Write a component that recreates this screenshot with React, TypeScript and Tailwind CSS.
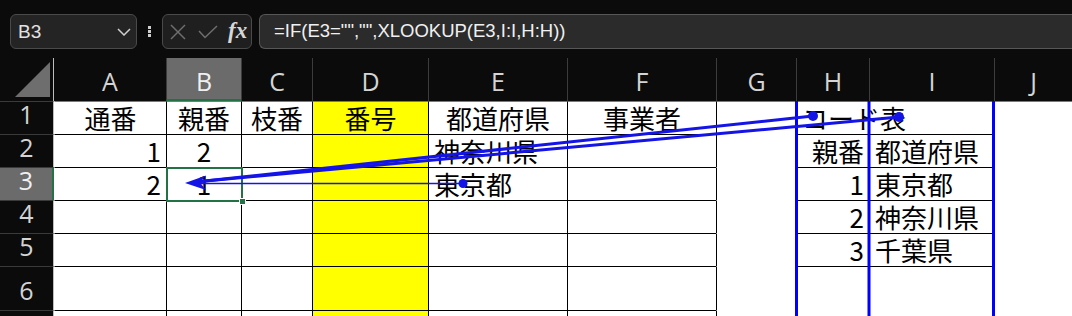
import React from "react";

const COLW = [
  "w-[54px]",
  "w-[112px]",
  "w-[75px]",
  "w-[71px]",
  "w-[116px]",
  "w-[139px]",
  "w-[149px]",
  "w-[80px]",
  "w-[73px]",
  "w-[125px]",
  "w-[78px]",
];
const LETTERS = ["A", "B", "C", "D", "E", "F", "G", "H", "I", "J"];

type Cell = { t: string; a: "l" | "c" | "r" };
type Row = { h: string; label: string; cells: Record<number, Cell> };

const ROWS: Row[] = [
  {
    h: "h-[33px]",
    label: "1",
    cells: {
      1: { t: "通番", a: "c" },
      2: { t: "親番", a: "c" },
      3: { t: "枝番", a: "c" },
      4: { t: "番号", a: "c" },
      5: { t: "都道府県", a: "c" },
      6: { t: "事業者", a: "c" },
      8: { t: "コード表", a: "l" },
    },
  },
  {
    h: "h-[33px]",
    label: "2",
    cells: {
      1: { t: "1", a: "r" },
      2: { t: "2", a: "c" },
      5: { t: "神奈川県", a: "l" },
      8: { t: "親番", a: "r" },
      9: { t: "都道府県", a: "l" },
    },
  },
  {
    h: "h-[33px]",
    label: "3",
    cells: {
      1: { t: "2", a: "r" },
      2: { t: "1", a: "c" },
      5: { t: "東京都", a: "l" },
      8: { t: "1", a: "r" },
      9: { t: "東京都", a: "l" },
    },
  },
  {
    h: "h-[33px]",
    label: "4",
    cells: {
      8: { t: "2", a: "r" },
      9: { t: "神奈川県", a: "l" },
    },
  },
  {
    h: "h-[33px]",
    label: "5",
    cells: {
      8: { t: "3", a: "r" },
      9: { t: "千葉県", a: "l" },
    },
  },
  { h: "h-[44px]", label: "6", cells: {} },
  { h: "h-[6px]", label: "", cells: {} },
];

function cellClass(r: number, c: number, cell?: Cell) {
  const parts: string[] = [
    COLW[c],
    "shrink-0 h-full whitespace-nowrap border-t border-l text-[26px] leading-[32px] text-black font-['Noto_Sans_CJK_JP',sans-serif]",
  ];
  if (r === 0) parts.push("border-t-[#7a7a7a]");
  else if (c <= 6) parts.push("border-t-black");
  else if ((c === 8 || c === 9) && r <= 5) parts.push("border-t-black");
  else parts.push("border-t-transparent");

  if (c >= 2 && c <= 7) parts.push("border-l-black");
  else parts.push("border-l-transparent");

  if (c === 4) parts.push("bg-[#ffff00]");

  if (cell) {
    if (cell.a === "r") parts.push("text-right pr-[5px]");
    else if (cell.a === "c") parts.push("text-center");
    else parts.push("text-left pl-[5px]");
  }
  if (r === 2 && c === 2) parts.push("relative");
  return parts.join(" ");
}

function RowHeader({ r, label }: { r: number; label: string }) {
  const sel = r === 2;
  return (
    <div
      className={
        sel
          ? "w-[54px] shrink-0 h-full border-t border-t-[#3a3a3a] border-r-2 border-r-[#217346] bg-[#6b6b6b] flex items-end justify-center pb-[7px] text-[25px] leading-none text-[#f0f0f0] font-['Open_Sans',sans-serif]"
          : "w-[54px] shrink-0 h-full border-t border-t-[#3a3a3a] border-r border-r-[#bdbdbd] bg-[#0b0b0b] flex items-end justify-center pb-[7px] text-[25px] leading-none text-[#d4d4d4] font-['Open_Sans',sans-serif]"
      }
    >
      {label}
    </div>
  );
}

export default function App() {
  return (
    <div className="relative w-[1072px] h-[316px] overflow-hidden bg-[#0b0b0b]">
      {/* Formula bar */}
      <div className="h-[58px] flex items-start pt-[14px] pl-[10px]">
        <div className="w-[127px] h-[35px] rounded-[6px] border border-[#4a4a4a] bg-[#242424] flex items-center justify-between pl-[7px] pr-[5px]">
          <span className="text-[19px] text-[#e2e2e2] font-['Liberation_Sans',sans-serif] leading-none">
            B3
          </span>
          <svg width="14" height="8" viewBox="0 0 14 8">
            <polyline points="1,1 7,7 13,1" fill="none" stroke="#cfcfcf" strokeWidth="1.5" />
          </svg>
        </div>
        <div className="ml-[11px] w-[3px] h-[35px] flex flex-col items-center justify-center gap-[1px]">
          <div className="w-[3px] h-[3px] bg-[#cfcfcf]" />
          <div className="w-[3px] h-[3px] bg-[#cfcfcf]" />
          <div className="w-[3px] h-[3px] bg-[#cfcfcf]" />
        </div>
        <div className="ml-[11px] w-[90px] h-[35px] rounded-[6px] border border-[#4a4a4a] bg-[#1f1f1f] flex items-center pl-[7px]">
          <svg width="16" height="16" viewBox="0 0 16 16">
            <line x1="1" y1="1" x2="15" y2="15" stroke="#6e6e6e" strokeWidth="1.5" />
            <line x1="15" y1="1" x2="1" y2="15" stroke="#6e6e6e" strokeWidth="1.5" />
          </svg>
          <svg className="ml-[12px]" width="20" height="14" viewBox="0 0 20 14">
            <polyline points="1,6 7,12.5 19,1" fill="none" stroke="#6e6e6e" strokeWidth="1.5" />
          </svg>
          <span className="ml-[10px] text-[23px] leading-none italic font-bold text-[#d6d6d6] font-['Liberation_Serif',serif] -mt-[3px]">
            fx
          </span>
        </div>
        <div className="ml-[7px] flex-1 -mr-[10px] h-[35px] rounded-l-[6px] border border-r-0 border-[#575757] bg-[#2b2b2b] flex items-center pl-[14px]">
          <span className="text-[18.5px] leading-none text-[#f0f0f0] font-['Liberation_Sans',sans-serif] whitespace-nowrap">
            {'=IF(E3="","",XLOOKUP(E3,I:I,H:H))'}
          </span>
        </div>
      </div>

      {/* Column headers */}
      <div className="h-[43px] flex bg-[#0b0b0b]">
        <div className="w-[54px] shrink-0 h-full border-r border-r-[#bdbdbd]">
          <svg width="53" height="43" viewBox="0 0 53 43">
            <polygon points="15,39 50,4 50,39" fill="#6e6e6e" />
          </svg>
        </div>
        {LETTERS.map((l, i) => {
          const c = i + 1;
          const sel = c === 2;
          return (
            <div
              key={l}
              className={
                COLW[c] +
                (sel
                  ? " shrink-0 h-full border-l border-l-[#3c3c3c] border-b-2 border-b-[#217346] bg-[#6b6b6b] flex items-end justify-center pb-[5px] text-[25px] leading-none text-[#f0f0f0] font-['Open_Sans',sans-serif]"
                  : c === 1
                  ? " shrink-0 h-full flex items-end justify-center pb-[7px] text-[25px] leading-none text-[#d4d4d4] font-['Open_Sans',sans-serif]"
                  : " shrink-0 h-full border-l border-l-[#3c3c3c] flex items-end justify-center pb-[7px] text-[25px] leading-none text-[#d4d4d4] font-['Open_Sans',sans-serif]")
              }
            >
              {l}
            </div>
          );
        })}
      </div>

      {/* Rows */}
      {ROWS.map((row, r) => (
        <div key={r} className={row.h + " flex bg-white"}>
          <RowHeader r={r} label={row.label} />
          {LETTERS.map((_, i) => {
            const c = i + 1;
            const cell = row.cells[c];
            return (
              <div key={c} className={cellClass(r, c, cell)}>
                {cell ? cell.t : null}
                {r === 2 && c === 2 ? (
                  <>
                    <div className="absolute -left-[1px] -top-[1px] w-[77px] h-[35px] border-2 border-[#217346]" />
                    <div className="absolute -right-[5px] -bottom-[5px] w-[7px] h-[7px] bg-[#217346] border border-white" />
                  </>
                ) : null}
              </div>
            );
          })}
        </div>
      ))}

      {/* Trace precedents overlay */}
      <svg
        className="absolute left-0 top-0 pointer-events-none"
        width="1072"
        height="316"
        viewBox="0 0 1072 316"
      >
        <line x1="795" y1="101.5" x2="995" y2="101.5" stroke="#5a5aff" strokeWidth="1" />
        <rect x="795" y="101" width="3" height="215" fill="#0000ff" />
        <rect x="867.5" y="101" width="3" height="215" fill="#0000ff" />
        <rect x="992" y="101" width="3" height="215" fill="#0000ff" />
        <line x1="463" y1="183.5" x2="200" y2="183.5" stroke="#1414e6" strokeWidth="1.6" />
        <line x1="899" y1="117" x2="200" y2="181.5" stroke="#1414e6" strokeWidth="3" />
        <line x1="813" y1="116" x2="200" y2="181.5" stroke="#1414e6" strokeWidth="3" />
        <polygon points="185,183 206,175.5 200,182.5 206,190" fill="#1414e6" />
        <circle cx="463" cy="183.5" r="4.5" fill="#1414e6" />
        <circle cx="813" cy="116" r="5" fill="#1414e6" />
        <circle cx="899" cy="117" r="5" fill="#1414e6" />
      </svg>
    </div>
  );
}
